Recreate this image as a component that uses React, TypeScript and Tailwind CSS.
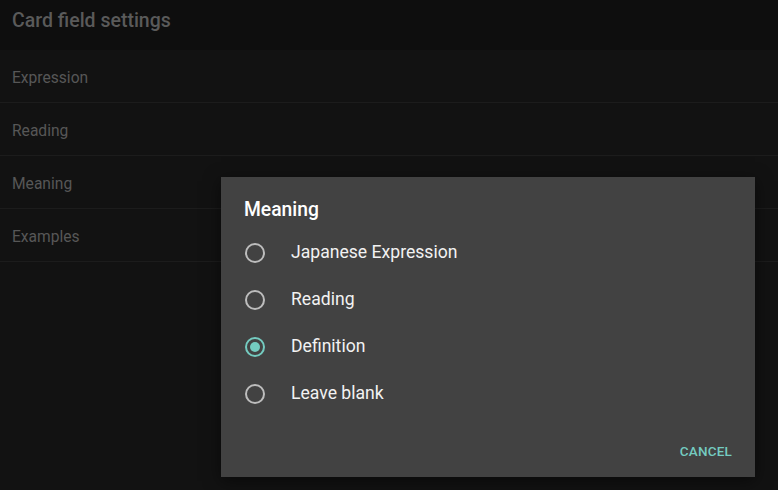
import React from "react";

const rows = ["Expression", "Reading", "Meaning", "Examples"];
const options = ["Japanese Expression", "Reading", "Definition", "Leave blank"];

function Radio({ checked }: { checked: boolean }) {
  return (
    <span
      className={
        "flex h-[20px] w-[20px] items-center justify-center rounded-full border-2 " +
        (checked ? "border-[#74cbc0]" : "border-[#bdbdbd]")
      }
    >
      {checked && <span className="h-[10px] w-[10px] rounded-full bg-[#74cbc0]" />}
    </span>
  );
}

export default function App() {
  return (
    <div
      className="relative h-[490px] w-[778px] overflow-hidden bg-[#121212]"
      style={{ fontFamily: "Roboto, 'Noto Sans', sans-serif" }}
    >
      <div className="flex h-[50px] items-start bg-[#0e0e0e] px-[12px] pt-[8px]">
        <h1 className="text-[19.5px] font-medium leading-[26px] text-[#5a5a5a]">Card field settings</h1>
      </div>
      <div className="flex flex-col">
        {rows.map((r) => (
          <div
            key={r}
            className="flex h-[53px] items-center border-b border-[#1c1c1c] px-[12px] pt-[6px] text-[15.6px] text-[#575757]"
          >
            {r}
          </div>
        ))}
      </div>

      <div className="absolute left-[221px] top-[177px] flex h-[300px] w-[534px] flex-col bg-[#424242] shadow-[0_4px_16px_rgba(0,0,0,0.5)]">
        <div className="px-[23px] pt-[21px] text-[19.3px] font-medium leading-[24px] text-white">Meaning</div>
        <div className="mt-[7px] flex flex-col">
          {options.map((o, i) => (
            <div key={o} className="flex h-[47px] items-center pl-[24px]">
              <Radio checked={i === 2} />
              <span className="ml-[26px] text-[17.6px] text-[#f2f2f2]">{o}</span>
            </div>
          ))}
        </div>
        <div className="mt-auto flex justify-end px-[23px] pb-[16px]">
          <span className="text-[13.5px] font-medium tracking-[0.2px] text-[#74cbc0]">CANCEL</span>
        </div>
      </div>
    </div>
  );
}
